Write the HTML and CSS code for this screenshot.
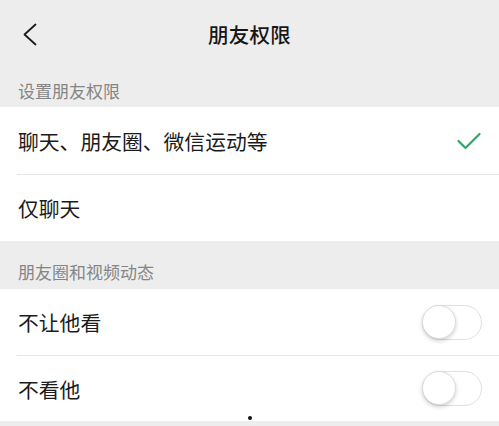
FILE: index.html
```html
<!DOCTYPE html>
<html lang="zh-CN">
<head>
  <meta charset="UTF-8" />
  <meta name="viewport" content="width=device-width, initial-scale=1.0" />
  <title>朋友权限</title>
  <link rel="stylesheet" href="styles.css">
</head>
<body>
  <div class="page">
    <header class="nav-bar">
      <svg class="back" width="14" height="24" viewBox="0 0 14 24">
        <polyline points="12.5,1.5 1.5,11.5 12.5,21.5" fill="none" stroke="#1c1c1c" stroke-width="1.8" stroke-linecap="round" stroke-linejoin="round" />
      </svg>
      <h1 class="nav-title">朋友权限</h1>
    </header>

    <div class="section-label first">设置朋友权限</div>
    <ul class="list tall">
      <li class="row">
        <span class="row-text">聊天、朋友圈、微信运动等</span>
        <svg class="check" width="24" height="18" viewBox="0 0 24 18">
          <polyline points="1.5,9 8.5,16 22.5,2" fill="none" stroke="#35a468" stroke-width="2.2" stroke-linecap="round" stroke-linejoin="round" />
        </svg>
      </li>
      <li class="row">
        <span class="row-text">仅聊天</span>
      </li>
    </ul>

    <div class="section-label">朋友圈和视频动态</div>
    <ul class="list">
      <li class="row">
        <span class="row-text">不让他看</span>
        <span class="switch"><span class="knob"></span></span>
      </li>
      <li class="row">
        <span class="row-text">不看他</span>
        <span class="switch"><span class="knob"></span></span>
        <span class="dot"></span>
      </li>
    </ul>
  </div>
</body>
</html>
```

FILE: styles.css
```css
* {
  box-sizing: border-box;
  margin: 0;
  padding: 0;
}
body {
  background: #ededed;
  font-family: "Noto Sans CJK SC", "Noto Sans", sans-serif;
  color: #1a1a1a;
}
.page {
  width: 499px;
  height: 426px;
  overflow: hidden;
}
.nav-bar {
  position: relative;
  height: 68px;
  display: flex;
  align-items: center;
  justify-content: center;
}
.back {
  position: absolute;
  left: 23px;
  top: 23px;
}
.nav-title {
  font-size: 20.5px;
  font-weight: 500;
  letter-spacing: 0.2px;
  color: #161616;
}
.section-label {
  font-size: 17px;
  line-height: 24px;
  color: #858585;
  padding: 19px 18px 5px;
}
.section-label.first {
  padding: 11px 18px 4px;
}
.list {
  list-style: none;
  background: #fff;
  padding-left: 17px;
}
.row {
  position: relative;
  height: 66px;
  display: flex;
  align-items: center;
  justify-content: space-between;
  padding: 0 17px 0 1px;
}
.list.tall .row {
  height: 67px;
}
.row + .row {
  border-top: 1px solid #e6e6e6;
}
.row-text {
  font-size: 20.8px;
  color: #1b1b1b;
}
.check {
  margin-right: 1px;
}
.switch {
  position: relative;
  width: 60px;
  height: 35px;
  border: 1.5px solid #e0e0e0;
  border-radius: 18px;
  background: #fff;
}
.knob {
  position: absolute;
  left: -1px;
  top: -1px;
  width: 34px;
  height: 34px;
  border-radius: 50%;
  background: #fff;
  border: 1px solid #dcdcdc;
  box-shadow: 0 2px 4px rgba(0, 0, 0, 0.18);
}
.dot {
  position: absolute;
  left: 231px;
  bottom: 1px;
  width: 4px;
  height: 4px;
  border-radius: 50%;
  background: #111;
}
```
